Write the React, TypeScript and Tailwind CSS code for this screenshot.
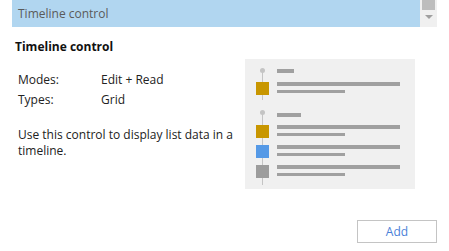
export default function App() {
  const rows = [66, 86, 106];
  const colors = ["#c89600", "#5599e6", "#9c9c9c"];

  return (
    <div
      className="w-[449px] h-[251px] bg-white text-[12px] text-[#222] relative overflow-hidden"
      style={{ fontFamily: '"Open Sans", "Noto Sans", sans-serif' }}
    >
      {/* selected list row + scrollbar */}
      <div className="flex pl-[12px]">
        <div className="w-[408px] h-[27px] bg-[#b1d6f0] flex items-center pl-[6px] text-[#5a5a5a]">
          Timeline control
        </div>
        <div className="w-[17px] h-[27px] bg-[#f0f0f0] flex flex-col items-center">
          <div className="w-[13px] h-[10px] bg-[#bdbdbd]" />
          <div className="mt-[5px] w-0 h-0 border-l-[4px] border-r-[4px] border-t-[4px] border-l-transparent border-r-transparent border-t-[#a0a0a0]" />
        </div>
      </div>

      <div className="flex pl-[15px] pt-[11px]">
        {/* left info */}
        <div className="w-[230px]">
          <div className="font-bold leading-[18px] text-[#111]">Timeline control</div>
          <div className="pl-[3px] mt-[15px] grid grid-cols-[83px_1fr] gap-y-[2px] leading-[18px]">
            <div>Modes:</div>
            <div>Edit + Read</div>
            <div>Types:</div>
            <div>Grid</div>
          </div>
          <div className="pl-[3px] mt-[18px] leading-[16px] w-[225px]">
            Use this control to display list data in a timeline.
          </div>
        </div>

        {/* illustration */}
        <div className="mt-[21px] w-[170px] h-[130px] bg-[#f0f0f0]">
          <svg width="170" height="130" viewBox="0 0 170 130">
            {/* group 1 */}
            <rect x="17" y="11" width="1" height="30" fill="#c4c4c4" />
            <circle cx="17.5" cy="11.5" r="2.5" fill="#c4c4c4" />
            <rect x="11" y="23" width="13" height="13" fill="#c89600" />
            <rect x="32" y="10" width="17" height="4" fill="#a0a0a0" />
            <rect x="32" y="23" width="123" height="4" fill="#a0a0a0" />
            <rect x="32" y="31" width="68" height="3" fill="#a0a0a0" />

            {/* group 2 */}
            <rect x="17" y="53" width="1" height="73" fill="#c4c4c4" />
            <circle cx="17.5" cy="53.5" r="2.5" fill="#c4c4c4" />
            <rect x="32" y="54" width="24" height="4" fill="#a0a0a0" />
            {rows.map((y, i) => (
              <g key={y}>
                <rect x="11" y={y} width="13" height="13" fill={colors[i]} />
                <rect x="32" y={y} width="123" height="4" fill="#a0a0a0" />
                <rect x="32" y={y + 8} width="68" height="3" fill="#a0a0a0" />
              </g>
            ))}
          </svg>
        </div>
      </div>

      <div className="absolute left-[357px] top-[220px] w-[80px] h-[23px] border border-[#c4c4c4] flex items-center justify-center text-[#4a7fd8]">
        Add
      </div>
    </div>
  );
}
